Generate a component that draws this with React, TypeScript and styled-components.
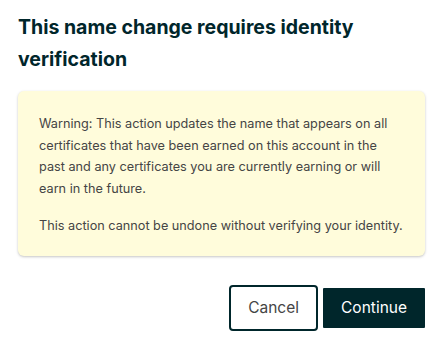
import React from 'react'
import styled, { createGlobalStyle } from 'styled-components'

const GlobalStyle = createGlobalStyle`
  html, body {
    margin: 0;
    padding: 0;
    background: #ffffff;
  }
  body {
    font-family: Inter, "Noto Sans", sans-serif;
  }
`

const Dialog = styled.div`
  width: 445px;
  box-sizing: border-box;
  padding: 11px 20px 0 18px;
`

const Title = styled.h2`
  margin: 0;
  font-size: 19.5px;
  line-height: 32px;
  font-weight: 700;
  color: #00262b;
`

const Alert = styled.div`
  margin-top: 16px;
  width: 407px;
  box-sizing: border-box;
  padding: 22px 22px 19px 21px;
  background: #fffcdb;
  border-radius: 6px;
  box-shadow: 0 1px 3px rgba(0, 0, 0, 0.18), 0 1px 2px rgba(0, 0, 0, 0.06);
  color: #454545;
  font-size: 12.7px;
  line-height: 21.6px;
`

const Paragraph = styled.p`
  margin: 0;
  & + & {
    margin-top: 16px;
  }
`

const Actions = styled.div`
  display: flex;
  justify-content: flex-end;
  align-items: center;
  gap: 5px;
  margin-top: 29px;
  width: 407px;
`

const Button = styled.button<{ $primary?: boolean }>`
  font-family: Inter, "Noto Sans", sans-serif;
  font-size: 15.5px;
  font-weight: 400;
  box-sizing: border-box;
  cursor: pointer;
  ${({ $primary }) =>
    $primary
      ? `
    height: 40px;
    padding: 0 18px;
    background: #00262b;
    color: #ffffff;
    border: none;
    border-radius: 1px;
  `
      : `
    height: 46px;
    padding: 0 17px;
    background: #ffffff;
    color: #454545;
    border: 2px solid #00262b;
    border-radius: 4px;
  `}
`

const App = () => {
  return (
    <>
      <GlobalStyle />
      <Dialog>
        <Title>This name change requires identity verification</Title>
        <Alert>
          <Paragraph>
            Warning: This action updates the name that appears on all certificates that have been earned on this
            account in the past and any certificates you are currently earning or will earn in the future.
          </Paragraph>
          <Paragraph>This action cannot be undone without verifying your identity.</Paragraph>
        </Alert>
        <Actions>
          <Button>Cancel</Button>
          <Button $primary>Continue</Button>
        </Actions>
      </Dialog>
    </>
  )
}

export default App
